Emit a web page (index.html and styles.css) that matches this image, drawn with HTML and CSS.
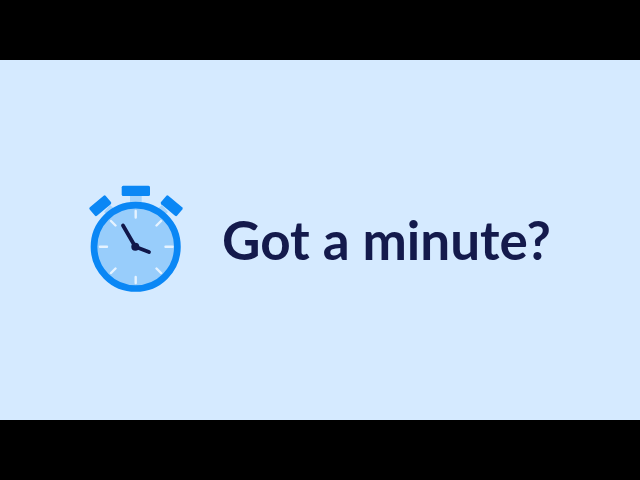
FILE: index.html
```html
<!DOCTYPE html>
<html lang="en">
<head>
<meta charset="utf-8">
<title>Got a minute?</title>
<link rel="stylesheet" href="styles.css">
</head>
<body>
<main class="slide">
<svg class="timer" width="110" height="125" viewBox="0 0 110 125" aria-hidden="true">
  <rect class="neck" x="50" y="20" width="11.700" height="9"/>
  <path class="neck" d="M24 37l6-7 6 5-6 7z"/>
  <path class="neck" d="M88 37l-6-7-6 5 6 7z"/>
  <rect class="cap" x="41.700" y="10.700" width="28.300" height="10.300" rx="1.500"/>
  <rect class="cap" x="-10.500" y="-5.500" width="21" height="11" rx="1.500" transform="translate(20.300 30.700) rotate(-40)"/>
  <rect class="cap" x="-10.500" y="-5.500" width="21" height="11" rx="1.500" transform="translate(91.700 30.700) rotate(40)"/>
  <circle class="face" cx="55.700" cy="71.800" r="41.700"/>
  <g class="ticks">
    <path d="M55.700 36v6.500M55.700 102v6M20 71.800h7M85.500 71.800h7"/>
    <path d="M31 46l4.500 4.500M76.500 93.500l4.500 4.500M81 46l-4.500 4.500M35.500 93.500l-4.500 4.500"/>
  </g>
  <path class="hands" d="M43 50.500 L55.300 71.700 L69 77"/>
  <circle class="pin" cx="55.300" cy="71.700" r="4"/>
</svg>
<h1 class="title">Got a minute?</h1>
</main>
</body>
</html>
```
FILE: styles.css
```css
html, body {
  margin: 0;
  height: 100%;
  background: #000;
}
body {
  display: flex;
  flex-direction: column;
  justify-content: center;
  width: 640px;
  height: 480px;
  overflow: hidden;
}
.slide {
  height: 360px;
  background: #d5eaff;
  display: flex;
  align-items: center;
  padding-left: 80px;
  box-sizing: border-box;
}
.timer {
  flex: none;
  margin-top: -5px;
}
.neck { fill: #a5d3fb; }
.cap { fill: #0a87f5; }
.face {
  fill: #98cdfb;
  stroke: #0a87f5;
  stroke-width: 6.700;
}
.ticks path {
  fill: none;
  stroke: #e6f3ff;
  stroke-width: 2.400;
  stroke-linecap: round;
}
.hands {
  fill: none;
  stroke: #10174a;
  stroke-width: 3.800;
  stroke-linecap: round;
  stroke-linejoin: round;
}
.pin { fill: #10174a; }
.title {
  margin: 0 0 0 32px;
  font-family: Lato, "Liberation Sans", sans-serif;
  font-weight: 700;
  font-size: 53px;
  line-height: 60px;
  color: #141a4c;
}
```
